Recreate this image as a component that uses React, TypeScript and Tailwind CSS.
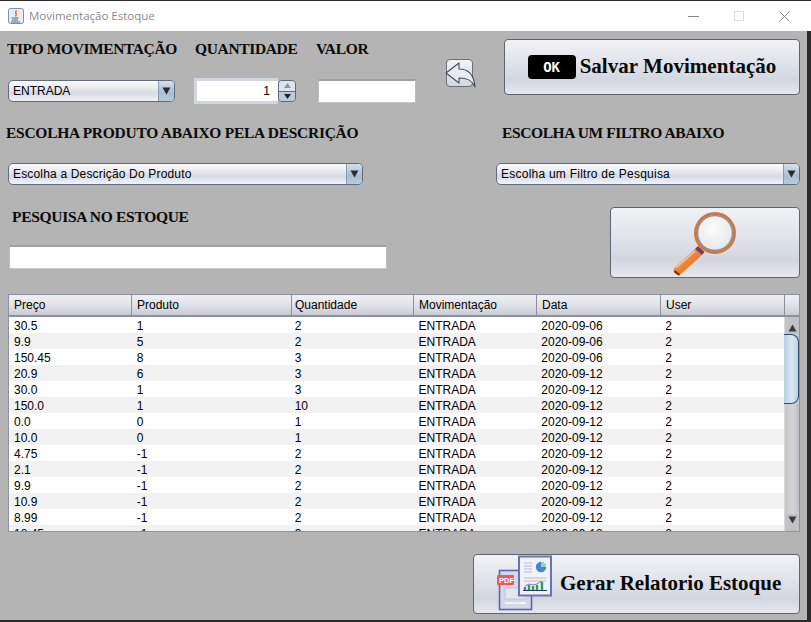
import React from 'react';

const rows = [
  ['30.5', '1', '2', '2020-09-06'],
  ['9.9', '5', '2', '2020-09-06'],
  ['150.45', '8', '3', '2020-09-06'],
  ['20.9', '6', '3', '2020-09-12'],
  ['30.0', '1', '3', '2020-09-12'],
  ['150.0', '1', '10', '2020-09-12'],
  ['0.0', '0', '1', '2020-09-12'],
  ['10.0', '0', '1', '2020-09-12'],
  ['4.75', '-1', '2', '2020-09-12'],
  ['2.1', '-1', '2', '2020-09-12'],
  ['9.9', '-1', '2', '2020-09-12'],
  ['10.9', '-1', '2', '2020-09-12'],
  ['8.99', '-1', '2', '2020-09-12'],
  ['18.45', '-1', '3', '2020-09-12'],
];

const columns = ['Preço', 'Produto', 'Quantidade', 'Movimentação', 'Data', 'User'];
const colWidths = ['w-[123px] pl-[5px]', 'w-[160px] pl-[5px]', 'w-[122px] pl-[3px]', 'w-[123px] pl-[5px]', 'w-[124px] pl-[5px]', 'w-[124px] pl-[5px]'];

const sans = "font-['Liberation_Sans',Arial,sans-serif]";
const serif = "font-['Liberation_Serif','Times_New_Roman',serif]";
const btnBg = 'bg-[linear-gradient(to_bottom,#f1f2f5_0%,#dfe2e8_45%,#d2d6df_75%,#e6e8ee_100%)]';

function Heading({ children, className = 'tracking-[-0.35px]' }: { children: React.ReactNode; className?: string }) {
  return <div className={`${serif} text-[15.5px] leading-[20px] font-bold text-[#0a0a0a] whitespace-nowrap ${className}`}>{children}</div>;
}

function Combo({ label, className = '', labelClass = '' }: { label: string; className?: string; labelClass?: string }) {
  return (
    <div className={`flex h-[22px] rounded-[5px] border border-[#5f6b7d] overflow-hidden bg-[linear-gradient(to_bottom,#fbfbfd_0%,#e6e8ee_40%,#d6dae3_60%,#f2f3f7_100%)] ${className}`}>
      <div className={`flex-1 pl-[4px] ${sans} text-[12px] leading-[21px] text-black ${labelClass}`}>{label}</div>
      <div className="w-[16px] flex items-center justify-center border-l border-[#8a9bb0] bg-[linear-gradient(to_bottom,#d5e0ec_0%,#a9bdd3_60%,#b9cbdd_100%)]">
        <svg width="9" height="8" viewBox="0 0 9 8"><path d="M0.5 0.5H8.5L4.5 7.5Z" fill="#2b2b2b" /></svg>
      </div>
    </div>
  );
}

function TextBox({ className = '' }: { className?: string }) {
  return <div className={`bg-white border-t-2 border-t-[#a0a0a0] border-x border-x-[#bdbdbd] border-b border-b-[#c8c8c8] ${className}`} />;
}

function MagnifierIcon() {
  return (
    <svg width="68" height="69" viewBox="0 0 68 69">
      <defs>
        <radialGradient id="lens" cx="0.45" cy="0.4" r="0.7">
          <stop offset="0" stopColor="#fbfbfb" />
          <stop offset="0.7" stopColor="#e9eaec" />
          <stop offset="1" stopColor="#bcbec4" />
        </radialGradient>
        <linearGradient id="handle" x1="0" y1="0" x2="1" y2="1">
          <stop offset="0" stopColor="#f9a654" />
          <stop offset="1" stopColor="#d9641c" />
        </linearGradient>
      </defs>
      <path d="M24 41 L31 47 L10 66 C8 67.5 4.5 67 3 64.5 C2 62.5 2.5 61 4 59.5 Z" fill="url(#handle)" />
      <path d="M5 60 L24 43" stroke="#fbc890" strokeWidth="1.5" />
      <path d="M3.5 63 L8.5 67" stroke="#6e3510" strokeWidth="2" />
      <path d="M24 41 L31 47 L33.5 44 L27 38 Z" fill="#7d3a5c" />
      <circle cx="44" cy="25" r="19.4" fill="url(#lens)" stroke="#c67a48" strokeWidth="3.2" />
      <circle cx="44" cy="25" r="17.3" fill="none" stroke="#6f6f73" strokeWidth="0.9" />
    </svg>
  );
}

function ReportIcon() {
  return (
    <svg width="56" height="58" viewBox="0 0 56 58">
      <rect x="3.5" y="15.5" width="32" height="39" fill="#d4d8ea" stroke="#5d66ac" strokeWidth="1.6" />
      <rect x="9" y="33" width="21" height="11" fill="#e4e6ee" stroke="#c2c6da" />
      <path d="M9 48H30" stroke="#f2f3f8" strokeWidth="2" />
      <rect x="1" y="20" width="17" height="10" rx="1" fill="#f4565c" />
      <text x="3" y="28" fontFamily="Liberation Sans, sans-serif" fontSize="7.5" fontWeight="700" fill="#fff">PDF</text>
      <rect x="23" y="1.5" width="32" height="39" fill="#f1f2f9" stroke="#6a72b4" strokeWidth="2" />
      <path d="M28 8H36M28 11H36M28 14H36M28 17H36M28 23H50M28 26H50" stroke="#b6bac8" strokeWidth="1" />
      <circle cx="45" cy="12" r="5.2" fill="#3f87d8" />
      <path d="M45 12V6.8A5.2 5.2 0 0 1 50.2 12Z" fill="#9ed2a8" />
      <path d="M27 35.5H51" stroke="#26336e" strokeWidth="1" />
      <path d="M29 35V32M33 35V30M37 35V31M41 35V30M46 35V27" stroke="#2f9e5a" strokeWidth="2.4" />
      <path d="M29 31L33 29L37 30L41 29L46 26" stroke="#26336e" strokeWidth="0.6" fill="none" />
    </svg>
  );
}

function Scrollbar() {
  return (
    <div className="w-[15px] flex flex-col bg-[linear-gradient(to_right,#b4b4b4_0%,#d5d5d9_40%,#c8c8cd_100%)] border-l border-[#d8d8d8]">
      <div className="h-[17px] flex items-end justify-center pb-[2px] bg-[#c2c2c5]">
        <svg width="9" height="8" viewBox="0 0 9 8"><path d="M4.5 0.5L8.5 7.5H0.5Z" fill="#3c3c3c" /></svg>
      </div>
      <div className="h-[70px] -ml-[1px] rounded-r-[8px] border-y border-r border-[#2f4a66] bg-[linear-gradient(to_right,#b7cfe2_0%,#dbe8f2_55%,#bcd2e4_100%)]" />
      <div className="flex-1 rounded-br-[8px] bg-[linear-gradient(to_right,#c6c6cb_0%,#d4d4d8_60%,#bdbdc2_100%)]" />
      <div className="h-[17px] flex items-start justify-center pt-[2px] bg-[#c2c2c5]">
        <svg width="9" height="8" viewBox="0 0 9 8"><path d="M0.5 0.5H8.5L4.5 7.5Z" fill="#3c3c3c" /></svg>
      </div>
    </div>
  );
}

export default function App() {
  return (
    <div className="w-[811px] h-[622px] bg-[#2b2b2b] overflow-hidden pt-px">
      {/* title bar */}
      <div className="h-[30px] bg-white flex items-center pl-[8px] pr-[21px]">
        <svg width="16" height="16" viewBox="0 0 16 16">
          <rect x="0.5" y="0.5" width="15" height="15" rx="2" fill="#e9edf2" stroke="#7d8fa5" />
          <path d="M8.5 2.5C6 5 10 6 7.5 8.5" stroke="#d9622b" strokeWidth="1.4" fill="none" />
          <path d="M3.5 10H10.5M4 12H10M3 14H12" stroke="#4a6a94" strokeWidth="1" />
        </svg>
        <span className="ml-[5px] font-['Open_Sans',sans-serif] text-[11.5px] text-[#8b8b8b]">Movimentação Estoque</span>
        <div className="ml-auto flex items-center gap-[35px]">
          <div className="w-[11px] h-px bg-[#8a8a8a]" />
          <div className="w-[10px] h-[10px] border border-[#dcdcdc]" />
          <svg width="11" height="11" viewBox="0 0 11 11"><path d="M0.5 0.5L10.5 10.5M10.5 0.5L0.5 10.5" stroke="#7b7b7b" strokeWidth="0.9" /></svg>
        </div>
      </div>

      {/* window body */}
      <div className="w-[807px] h-[589px] bg-[#b4b4b4] flex flex-col relative">
        {/* first row */}
        <div className="flex items-start h-[65px] pt-[8px]">
          <div className="pl-[7px] w-[446px]">
            <div className="flex">
              <Heading className="w-[188px] tracking-[-0.4px]">TIPO MOVIMENTAÇÃO</Heading>
              <Heading className="w-[121px] tracking-[-0.35px]">QUANTIDADE</Heading>
              <Heading>VALOR</Heading>
            </div>
          </div>
          <button className="mt-[20px] w-[27px] h-[28px] rounded-[4px] border border-[#6a6f7a] bg-[linear-gradient(to_bottom,#f2f3f6_0%,#d4d7df_100%)] relative">
            <svg className="absolute -left-[2px] top-[1px]" width="32" height="28" viewBox="0 0 32 28">
              <path d="M1 12L14 2V8C23 8 29 13 30 26C27 19 22 17 14 17V22Z" fill="#e9ebf0" stroke="#444c5c" strokeWidth="1.1" strokeLinejoin="round" />
            </svg>
          </button>
          <button className={`ml-[31px] w-[296px] h-[56px] rounded-[4px] border border-[#5e6472] ${btnBg} flex items-center justify-center gap-[4px]`}>
            <span className="font-['DejaVu_Sans_Mono',monospace] w-[48px] h-[24px] bg-black rounded-[4px] text-white text-[14px] font-bold leading-[24px] text-center">OK</span>
            <span className={`${serif} text-[21px] font-bold text-[#0a0a0a] tracking-[0.03px]`}>Salvar Movimentação</span>
          </button>
        </div>

        {/* controls under the first headings */}
        <div className="flex items-center -mt-[18px] h-[26px] pl-[8px]">
          <Combo label="ENTRADA" className="w-[167px]" />
          <div className="ml-[19px] flex items-center">
            <div className={`w-[84px] h-[26px] bg-white border-[3px] border-[#d3d6dc] ${sans} text-[12px] leading-[20px] text-black text-right pr-[8px] border-r-0`}>1</div>
            <div className="w-[18px] h-[22px] rounded-[4px] border border-[#5f6b7d] overflow-hidden flex flex-col">
              <div className="flex-1 flex items-center justify-center bg-[#dfe3ea]">
                <svg width="7" height="5" viewBox="0 0 7 5"><path d="M3.5 0L7 5H0Z" fill="#8f949e" /></svg>
              </div>
              <div className="flex-1 flex items-center justify-center bg-[#bccbdc] border-t border-[#5f6b7d]">
                <svg width="7" height="5" viewBox="0 0 7 5"><path d="M0 0H7L3.5 5Z" fill="#222" /></svg>
              </div>
            </div>
          </div>
          <TextBox className="ml-[22px] w-[98px] h-[24px]" />
        </div>

        {/* second row */}
        <div className="flex mt-[19px] pl-[6px]">
          <Heading className="w-[496px] tracking-[-0.27px]">ESCOLHA PRODUTO ABAIXO PELA DESCRIÇÃO</Heading>
          <Heading className="tracking-[-0.39px]">ESCOLHA UM FILTRO ABAIXO</Heading>
        </div>
        <div className="flex mt-[20px] pl-[8px]">
          <Combo label="Escolha a Descrição Do Produto" className="w-[355px]" labelClass="tracking-[0.17px]" />
          <Combo label="Escolha um Filtro de Pesquisa" className="ml-[133px] w-[304px]" labelClass="tracking-[0.24px]" />
        </div>

        {/* search row */}
        <div className="flex mt-[22px] pl-[9px]">
          <div className="w-[378px]">
            <Heading className="ml-[3px] tracking-[-0.3px]">PESQUISA NO ESTOQUE</Heading>
            <TextBox className="mt-[18px] h-[24px] w-[378px]" />
          </div>
          <button className={`ml-[223px] w-[190px] h-[71px] rounded-[4px] border border-[#5e6472] ${btnBg} flex justify-center`}>
            <MagnifierIcon />
          </button>
        </div>

        {/* table */}
        <div className="mt-[16px] ml-[8px] w-[792px] h-[238px] border border-[#8f93a0] bg-white flex flex-col overflow-hidden">
          <div className="h-[22px] flex shrink-0 border-b-2 border-[#8c909c] bg-[linear-gradient(to_bottom,#f0f1f4_0%,#dcdee4_60%,#c8cbd3_100%)]">
            {columns.map((c, i) => (
              <div key={c} className={`${colWidths[i]} shrink-0 border-r border-[#8c909c] ${sans} text-[12px] leading-[21px] text-black`}>{c}</div>
            ))}
            <div className="flex-1" />
          </div>
          <div className="flex flex-1 min-h-0">
            <div className="w-[775px] overflow-hidden">
              {rows.map((r, i) => (
                <div key={i} className={`flex h-[16px] ${i % 2 ? 'bg-[#f2f2f2]' : 'bg-white'} ${sans} text-[12px] leading-[18px] text-black`}>
                  <div className={colWidths[0]}>{r[0]}</div>
                  <div className={colWidths[1]}>{r[1]}</div>
                  <div className={colWidths[2]}>{r[2]}</div>
                  <div className={colWidths[3]}>ENTRADA</div>
                  <div className={colWidths[4]}>{r[3]}</div>
                  <div className={colWidths[5]}>2</div>
                </div>
              ))}
            </div>
            <Scrollbar />
          </div>
        </div>

        {/* report button */}
        <div className="flex justify-end mt-[22px] mr-[7px]">
          <button className={`w-[327px] h-[60px] rounded-[4px] border border-[#5e6472] ${btnBg} flex items-center pl-[22px]`}>
            <ReportIcon />
            <span className={`${serif} ml-[8px] text-[21px] font-bold text-[#0a0a0a]`}>Gerar Relatorio Estoque</span>
          </button>
        </div>
      </div>
    </div>
  );
}
